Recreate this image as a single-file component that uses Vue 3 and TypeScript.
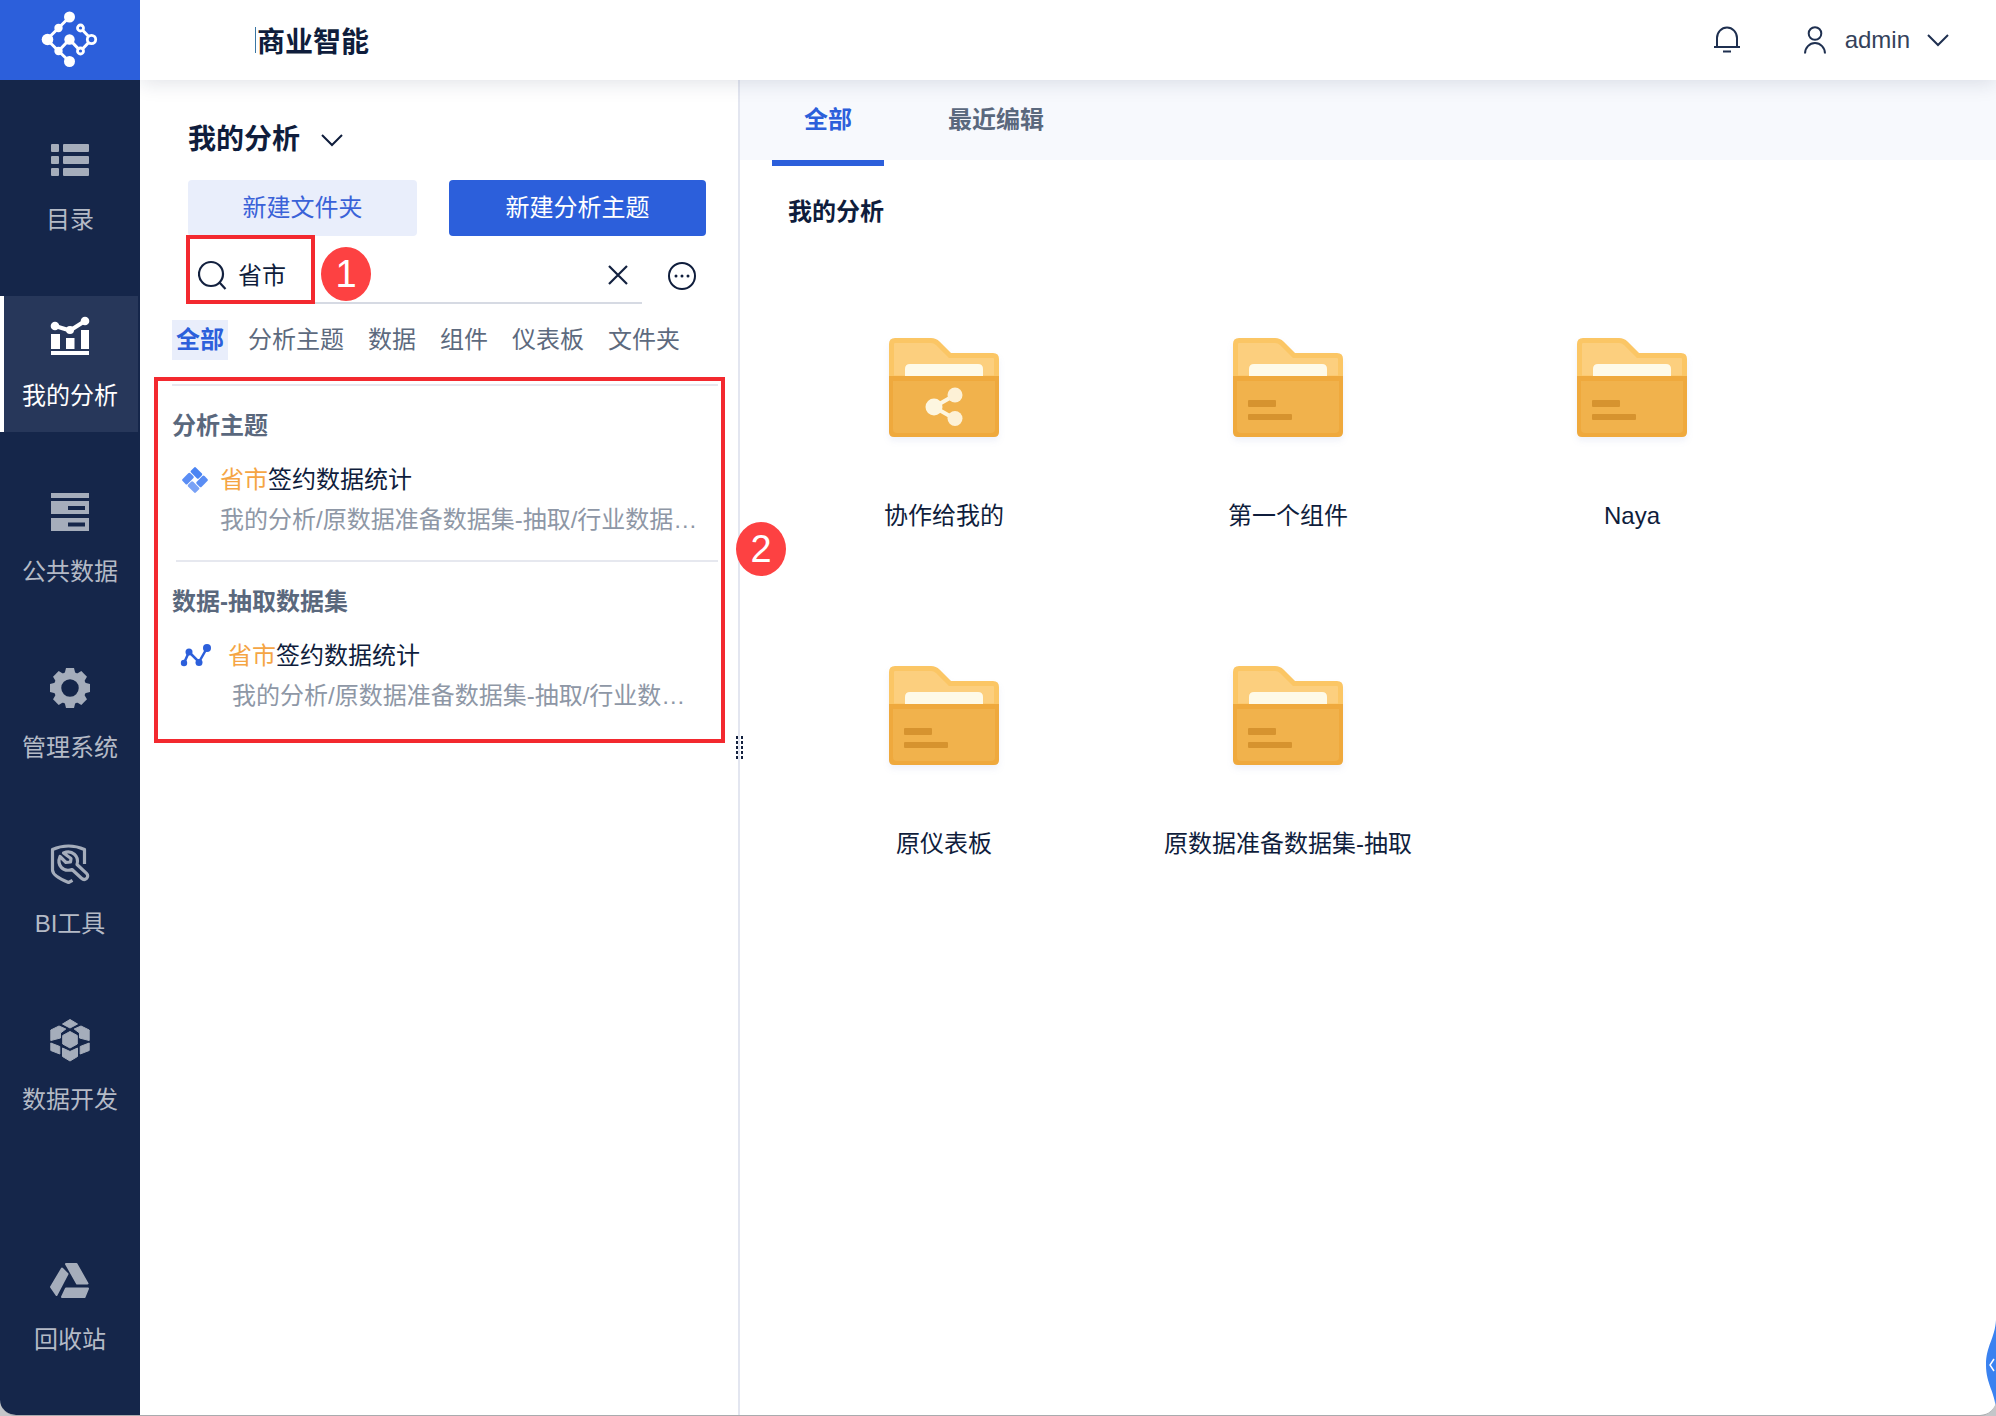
<script setup lang="ts">
import { ref } from 'vue'

interface NavItem {
  key: string
  label: string
}

interface ResultGroup {
  key: string
  title: string
  match: string
  rest: string
  path: string
}

interface Folder {
  name: string
  shared?: boolean
}

const navItems: NavItem[] = [
  { key: 'catalog', label: '目录' },
  { key: 'analysis', label: '我的分析' },
  { key: 'data', label: '公共数据' },
  { key: 'system', label: '管理系统' },
  { key: 'tools', label: 'BI工具' },
  { key: 'dev', label: '数据开发' },
  { key: 'trash', label: '回收站' },
]
const activeNav = ref('analysis')

const keyword = ref('省市')

const filters = ['全部', '分析主题', '数据', '组件', '仪表板', '文件夹']
const activeFilter = ref('全部')

const groups: ResultGroup[] = [
  {
    key: 'subject',
    title: '分析主题',
    match: '省市',
    rest: '签约数据统计',
    path: '我的分析/原数据准备数据集-抽取/行业数据…',
  },
  {
    key: 'dataset',
    title: '数据-抽取数据集',
    match: '省市',
    rest: '签约数据统计',
    path: '我的分析/原数据准备数据集-抽取/行业数…',
  },
]

const tabs = ['全部', '最近编辑']
const activeTab = ref('全部')

const folders: Folder[] = [
  { name: '协作给我的', shared: true },
  { name: '第一个组件' },
  { name: 'Naya' },
  { name: '原仪表板' },
  { name: '原数据准备数据集-抽取' },
]

const teeth = [0, 45, 90, 135, 180, 225, 270, 315]
</script>

<template>
  <div class="app">
    <aside class="sidebar">
      <a class="logo" href="#" aria-label="首页">
        <svg width="60" height="60" viewBox="0 0 60 60" fill="none" stroke="#fff" stroke-width="3">
          <path d="M29.5 7 18.5 18 7 29.5 18.5 41 29.5 51.5M18.5 41 29.5 29.5 40.5 41 51.5 29.5 40.5 18" />
          <g fill="#fff" stroke="none">
            <circle cx="29.5" cy="7" r="5.5" />
            <circle cx="18.5" cy="18" r="4.2" />
            <circle cx="7.5" cy="29.5" r="5.8" />
            <circle cx="18.5" cy="41" r="4.2" />
            <circle cx="29.5" cy="51.5" r="5.5" />
            <circle cx="29.5" cy="29.5" r="5.2" />
          </g>
          <g fill="#2c5fdb" stroke-width="2.8">
            <circle cx="51.5" cy="29.5" r="4.2" />
            <circle cx="40.5" cy="18" r="3" />
            <circle cx="40.5" cy="41" r="3" />
          </g>
        </svg>
      </a>
      <nav class="nav">
        <a
          v-for="item in navItems"
          :key="item.key"
          href="#"
          class="nav-item"
          :class="{ active: item.key === activeNav, last: item.key === 'trash' }"
          @click.prevent="activeNav = item.key"
        >
          <svg class="nav-icon" viewBox="0 0 40 40" width="40" height="40" fill="currentColor">
            <template v-if="item.key === 'catalog'">
              <rect x="1" y="4" width="8" height="8" rx="1" />
              <rect x="13" y="4" width="26" height="8" rx="1" />
              <rect x="1" y="16" width="8" height="8" rx="1" />
              <rect x="13" y="16" width="26" height="8" rx="1" />
              <rect x="1" y="28" width="8" height="8" rx="1" />
              <rect x="13" y="28" width="26" height="8" rx="1" />
            </template>
            <template v-else-if="item.key === 'analysis'">
              <path d="M1 18h9v15H1zM16 22h8.500v11H16zM31 14h8v19h-8zM1 35h38v4H1z" />
              <path d="M5 10 20 14.500 35 5" fill="none" stroke="currentColor" stroke-width="4" />
              <circle cx="5" cy="10" r="4.3" />
              <circle cx="20" cy="14" r="4" />
              <circle cx="35" cy="5" r="4.3" />
            </template>
            <template v-else-if="item.key === 'data'">
              <path
                fill-rule="evenodd"
                d="M1 1h38v5H1zM1 9h38v13H1zM18 14v4h17v-4zM1 26h38v13H1zM18 30.5v4h17v-4z"
              />
            </template>
            <template v-else-if="item.key === 'system'">
              <circle cx="20" cy="20" r="12.5" fill="none" stroke="currentColor" stroke-width="7.500" />
              <path
                v-for="deg in teeth"
                :key="deg"
                d="M14.5 6 16 0h8l1.5 6z"
                :transform="`rotate(${deg} 20 20)`"
              />
            </template>
            <template v-else-if="item.key === 'tools'">
              <g fill="none" stroke="currentColor" stroke-width="3.2" stroke-linejoin="round">
                <path d="M34.5 20V5.500C29 3 24 2 18.500 2S8 3 2.500 5.500V26c0 4 6 8.500 16 12.500l4-2.200" />
                <path
                  d="M13.5 9C22 5.500 29.500 12 27 20.500l9.500 8.800c3.500 3.500-1.500 8.200-5 5L22 25.500C13 28.500 6.500 21 10 12.500l6 6 4.500-.5.500-3.500z"
                />
              </g>
            </template>
            <template v-else-if="item.key === 'dev'">
              <g stroke="currentColor" stroke-width="1" stroke-linejoin="round">
                <path d="M20-.5 27.500 4 20 8 12.500 4z" />
                <path d="M.8 10 9 6l6.800 3-5.300 4v5L.8 20.500z" />
                <path d="M39.200 10 31 6l-6.800 3 5.300 4v5l9.700 2.500z" />
                <path d="M20 11.500 27.300 15.500v8.500L20 28l-7.300-4v-8.500z" />
                <path d="M.8 23 9.800 26.500v7.500L.8 30.500z" />
                <path d="M39.200 23 30.200 26.500v7.500l9-3.500z" />
                <path d="M12.500 28 20 31.500 27.500 28v8.500L20 41l-7.500-4.500z" />
              </g>
            </template>
            <template v-else>
              <g stroke="currentColor" stroke-width="2" stroke-linejoin="round">
                <path d="M12 8.500 17.500 14 6.500 35 1 27z" />
                <path d="M16 4h10.500l11 19.500H27z" />
                <path d="M16 28.500h22L34.500 37H12z" />
              </g>
            </template>
          </svg>
          <span class="nav-label">{{ item.label }}</span>
        </a>
      </nav>
    </aside>

    <div class="page">
      <header class="header">
        <h1 class="brand">商业智能</h1>
        <div class="user-area">
          <button class="icon-btn bell" type="button" aria-label="通知">
            <svg width="28" height="28" viewBox="0 0 28 28" fill="none" stroke="currentColor" stroke-width="2">
              <path d="M4 21V12a10 10.500 0 0 1 20 0V21M1 21h26M10 25.500h8" />
            </svg>
          </button>
          <button class="icon-btn user" type="button">
            <svg width="28" height="28" viewBox="0 0 28 28" fill="none" stroke="currentColor" stroke-width="2">
              <circle cx="14" cy="7.5" r="6.3" />
              <path d="M4 27.500a10 10.500 0 0 1 20 0" />
            </svg>
            <span>admin</span>
            <svg class="chevron" width="24" height="24" viewBox="0 0 24 24" fill="none" stroke="currentColor" stroke-width="2">
              <path d="M2 7 12 17 22 7" />
            </svg>
          </button>
        </div>
      </header>

      <div class="body">
        <section class="panel">
          <button class="panel-title" type="button">
            <span>我的分析</span>
            <svg width="24" height="24" viewBox="0 0 24 24" fill="none" stroke="currentColor" stroke-width="2">
              <path d="M2 7 12 17 22 7" />
            </svg>
          </button>
          <div class="actions">
            <button class="btn light" type="button">新建文件夹</button>
            <button class="btn primary" type="button">新建分析主题</button>
          </div>
          <div class="search-row">
            <div class="search">
              <svg width="30" height="30" viewBox="0 0 30 30" fill="none" stroke="#13213f" stroke-width="2.200">
                <circle cx="13" cy="14" r="12" />
                <path d="M21.500 22.500 27.500 29" />
              </svg>
              <input v-model="keyword" type="text" aria-label="搜索" />
              <button class="icon-btn" type="button" aria-label="清除" @click="keyword = ''">
                <svg width="20" height="20" viewBox="0 0 20 20" fill="none" stroke="#13213f" stroke-width="2.200">
                  <path d="M1 1 19 19M19 1 1 19" />
                </svg>
              </button>
            </div>
            <button class="icon-btn" type="button" aria-label="更多">
              <svg width="30" height="30" viewBox="0 0 30 30" fill="none" stroke="currentColor" stroke-width="2">
                <circle cx="15" cy="15" r="13" />
                <g fill="currentColor" stroke="none">
                  <circle cx="9" cy="15" r="1.5" />
                  <circle cx="15" cy="15" r="1.5" />
                  <circle cx="21" cy="15" r="1.5" />
                </g>
              </svg>
            </button>
          </div>
          <div class="filters">
            <button
              v-for="f in filters"
              :key="f"
              type="button"
              class="filter"
              :class="{ active: f === activeFilter }"
              @click="activeFilter = f"
            >
              {{ f }}
            </button>
          </div>
          <div class="results">
            <article v-for="g in groups" :key="g.key" class="group" :class="g.key">
              <h2>{{ g.title }}</h2>
              <a class="result" href="#">
                <svg v-if="g.key === 'subject'" class="result-icon" width="26" height="26" viewBox="0 0 26 26">
                  <g transform="rotate(45 13 13)">
                    <rect x="3.5" y="3.5" width="11" height="7" rx="1.5" fill="#4a84f3" />
                    <rect x="15.5" y="3.5" width="7" height="11" rx="1.5" fill="#5a8df4" />
                    <rect x="11.5" y="15.500" width="11" height="7" rx="1.5" fill="#7aa2f6" />
                    <rect x="3.5" y="11.500" width="7" height="11" rx="1.5" fill="#5a8df4" />
                  </g>
                </svg>
                <svg v-else class="result-icon" width="32" height="24" viewBox="0 0 32 24" fill="#2c5fdb">
                  <path d="M4 19 9 8 19 18 27 4" fill="none" stroke="#2c5fdb" stroke-width="2.500" />
                  <circle cx="4" cy="19" r="3.2" />
                  <circle cx="9" cy="8" r="3.5" />
                  <circle cx="19" cy="18.500" r="3.5" />
                  <circle cx="27" cy="4" r="4" />
                </svg>
                <span class="result-name"><em>{{ g.match }}</em>{{ g.rest }}</span>
              </a>
              <p class="result-path">{{ g.path }}</p>
            </article>
          </div>

          <svg class="drag" width="10" height="26" viewBox="0 0 10 26" fill="#13213f">
            <template v-for="n in 5" :key="n">
              <rect x="1" :y="n * 5 - 4" width="2" height="3" />
              <rect x="6" :y="n * 5 - 4" width="2" height="3" />
            </template>
          </svg>
          <div class="mark mark-search"></div>
          <div class="mark mark-results"></div>
          <span class="badge badge-one">1</span>
          <span class="badge badge-two">2</span>
        </section>

        <main class="content">
          <div class="tabs" role="tablist">
            <button
              v-for="t in tabs"
              :key="t"
              type="button"
              role="tab"
              class="tab"
              :class="{ active: t === activeTab }"
              @click="activeTab = t"
            >
              {{ t }}
            </button>
          </div>
          <h2 class="content-title">我的分析</h2>
          <div class="grid">
            <a v-for="folder in folders" :key="folder.name" class="tile" href="#">
              <svg class="folder" width="110" height="100" viewBox="0 0 110 100">
                <path d="M2.5 40V6q0-3.500 3.500-3.500h36q4 0 7 3l12 12h43q3.500 0 3.500 3.500v19z" fill="#fccf7e" stroke="#fbc665" stroke-width="5" />
                <path d="M16 40V31q0-5 5-5h68q5 0 5 5v9z" fill="#fefae8" />
                <path d="M0 38h110v56q0 5-5 5H5q-5 0-5-5z" fill="#efa93d" />
                <path d="M4 43h102v48q0 4-4 4H8q-4 0-4-4z" fill="#f1b24c" />
                <g v-if="folder.shared">
                  <path d="M66 57 45 69 66 81" fill="none" stroke="#fdf6e0" stroke-width="4" />
                  <circle cx="45" cy="69" r="8.5" fill="#fdf6e0" />
                  <circle cx="66" cy="57" r="7.5" fill="#fdf1d6" />
                  <circle cx="66" cy="80.5" r="7.5" fill="#fdf1d6" />
                </g>
                <g v-else fill="#d6932f">
                  <rect x="15" y="62" width="28" height="7" rx="1" />
                  <rect x="15" y="76" width="44" height="6" rx="1" />
                </g>
              </svg>
              <span>{{ folder.name }}</span>
            </a>
          </div>
        </main>
      </div>
    </div>

    <button class="assist" type="button" aria-label="展开助手">
      <svg width="10" height="90" viewBox="0 0 10 90">
        <path d="M10 0C9 18 0 26 0 45s9 27 10 45z" fill="#3a82f0" />
        <path d="M8 39 4 45 8 51" fill="none" stroke="#fff" stroke-width="1.500" />
      </svg>
    </button>
  </div>
</template>

<style>
body {
  margin: 0;
  background: #c4c6c9;
}
</style>

<style scoped>
.app {
  position: relative;
  display: flex;
  box-sizing: border-box;
  min-height: 100vh;
  border-bottom: 1px solid #a9abae;
  border-radius: 0 0 16px 16px;
  overflow: hidden;
  background: #fff;
  color: #0f1d3c;
  font-family: "Liberation Sans", "Noto Sans CJK SC", sans-serif;
  font-size: 24px;
  line-height: 40px;
}

button,
input {
  margin: 0;
  padding: 0;
  border: 0;
  background: none;
  color: inherit;
  font: inherit;
}

button {
  cursor: pointer;
}

a {
  color: inherit;
  text-decoration: none;
}

svg {
  display: block;
  flex: none;
}

h1,
h2,
p {
  margin: 0;
}

.sidebar {
  display: flex;
  flex: none;
  flex-direction: column;
  width: 140px;
  background: #15264a;
}

.logo {
  display: flex;
  align-items: center;
  justify-content: center;
  height: 80px;
  background: #2c5fdb;
}

.nav {
  display: flex;
  flex: 1;
  flex-direction: column;
  gap: 40px;
  padding: 40px 0 39px;
}

.nav-item {
  display: flex;
  flex-direction: column;
  align-items: center;
  gap: 20px;
  box-sizing: border-box;
  height: 136px;
  padding-top: 20px;
  color: #a5adbb;
}

.nav-item.active {
  margin-right: 2px;
  padding-right: 2px;
  border-left: 4px solid #fff;
  background: #27375a;
  color: #fff;
}

.nav-item.last {
  margin-top: auto;
}

.nav-icon {
  overflow: visible;
}

.nav-label {
  color: #b4bac6;
}

.active .nav-label {
  color: #fff;
}

.page {
  display: flex;
  flex: 1;
  flex-direction: column;
  min-width: 0;
}

.header {
  position: relative;
  z-index: 1;
  display: flex;
  align-items: center;
  justify-content: space-between;
  height: 80px;
  padding: 0 46px 0 115px;
  background: #fff;
  box-shadow: 0 2px 20px rgba(20, 38, 74, 0.14);
  clip-path: inset(0 0 -30px 0);
}

.brand {
  padding: 6px 0 0 1px;
  border-left: 1px solid #3a76a4;
  font-size: 28px;
  line-height: 20px;
}

.user-area {
  display: flex;
  align-items: center;
  gap: 60px;
  color: #1f3050;
}

.icon-btn {
  display: flex;
  align-items: center;
}

.user {
  gap: 16px;
}

.user span {
  color: #34425b;
}

.body {
  display: flex;
  flex: 1;
}

.panel {
  position: relative;
  flex: none;
  box-sizing: border-box;
  width: 600px;
  padding: 40px 20px 40px 32px;
  border-right: 2px solid #e3e6f0;
}

.panel-title {
  display: flex;
  align-items: center;
  gap: 20px;
  margin-left: 16px;
  font-size: 28px;
  font-weight: bold;
}

.actions {
  display: flex;
  gap: 32px;
  margin: 20px 12px 0 16px;
}

.btn {
  flex: 230 1 0;
  height: 56px;
  border-radius: 4px;
}

.btn.light {
  background: #e9eefb;
  color: #3a62d8;
}

.btn.primary {
  flex-grow: 258;
  background: #2c5fdb;
  color: #fff;
}

.search-row {
  display: flex;
  align-items: center;
  gap: 25px;
  margin: 0 21px 0 16px;
}

.search {
  display: flex;
  flex: 1;
  align-items: center;
  box-sizing: border-box;
  height: 68px;
  padding: 12px 14px 0 10px;
  border-bottom: 2px solid #d6dae3;
}

.search input {
  flex: 1;
  min-width: 0;
  height: 40px;
  margin-left: 10px;
  padding-top: 2px;
  outline: none;
}

.search-row > .icon-btn {
  padding-top: 12px;
}

.filters {
  display: flex;
  gap: 16px;
  margin-top: 16px;
}

.filter {
  padding: 0 4px;
  color: #5d6a7e;
}

.filter.active {
  background: #e9eefb;
  color: #2c5fdb;
  font-weight: bold;
}

.results {
  margin-top: 24px;
}

.group {
  padding: 20px 0;
  border-top: 2px solid #e6e8ef;
}

.group + .group {
  margin-left: 4px;
}

.group + .group h2 {
  margin-left: -4px;
}

.group h2 {
  color: #5a687d;
  font-size: 24px;
}

.result {
  display: flex;
  align-items: center;
  gap: 12px;
  margin-top: 14px;
  padding-left: 10px;
}

.dataset .result {
  gap: 16px;
  padding-left: 4px;
}

.result-name em {
  color: #f5a544;
  font-style: normal;
}

.result-path {
  padding-left: 48px;
  overflow: hidden;
  color: #8e97a6;
  white-space: nowrap;
}

.dataset .result-path {
  padding-left: 56px;
}

.drag {
  position: absolute;
  top: 655px;
  right: -7px;
}

.mark {
  position: absolute;
  box-sizing: border-box;
  border: 4px solid #f3292f;
  pointer-events: none;
}

.mark-search {
  top: 155px;
  left: 46px;
  width: 129px;
  height: 69px;
}

.mark-results {
  top: 297px;
  right: 13px;
  left: 14px;
  height: 366px;
}

.badge {
  position: absolute;
  width: 50px;
  height: 54px;
  border-radius: 50%;
  background: #fd4142;
  color: #fff;
  font-size: 38px;
  line-height: 54px;
  text-align: center;
}

.badge-one {
  top: 167px;
  left: 181px;
}

.badge-two {
  top: 442px;
  right: -48px;
}

.content {
  flex: 1;
  min-width: 0;
}

.tabs {
  display: flex;
  gap: 32px;
  height: 80px;
  padding: 0 32px;
  background: #f7f9fd;
}

.tab {
  box-sizing: border-box;
  height: 86px;
  padding: 0 32px;
  border-bottom: 6px solid transparent;
  color: #5a687d;
  font-weight: bold;
}

.tab.active {
  border-color: #2c5fdb;
  color: #2c5fdb;
}

.content-title {
  margin: 32px 48px 0;
  font-size: 24px;
}

.grid {
  display: grid;
  grid-template-columns: repeat(auto-fill, 344px);
  row-gap: 130px;
  padding: 106px 32px 40px;
}

.tile {
  display: flex;
  flex-direction: column;
  align-items: center;
  gap: 58px;
}

.folder {
  filter: drop-shadow(0 4px 3px rgba(60, 90, 180, 0.08));
}

.assist {
  position: absolute;
  right: 0;
  bottom: 5px;
}
</style>
